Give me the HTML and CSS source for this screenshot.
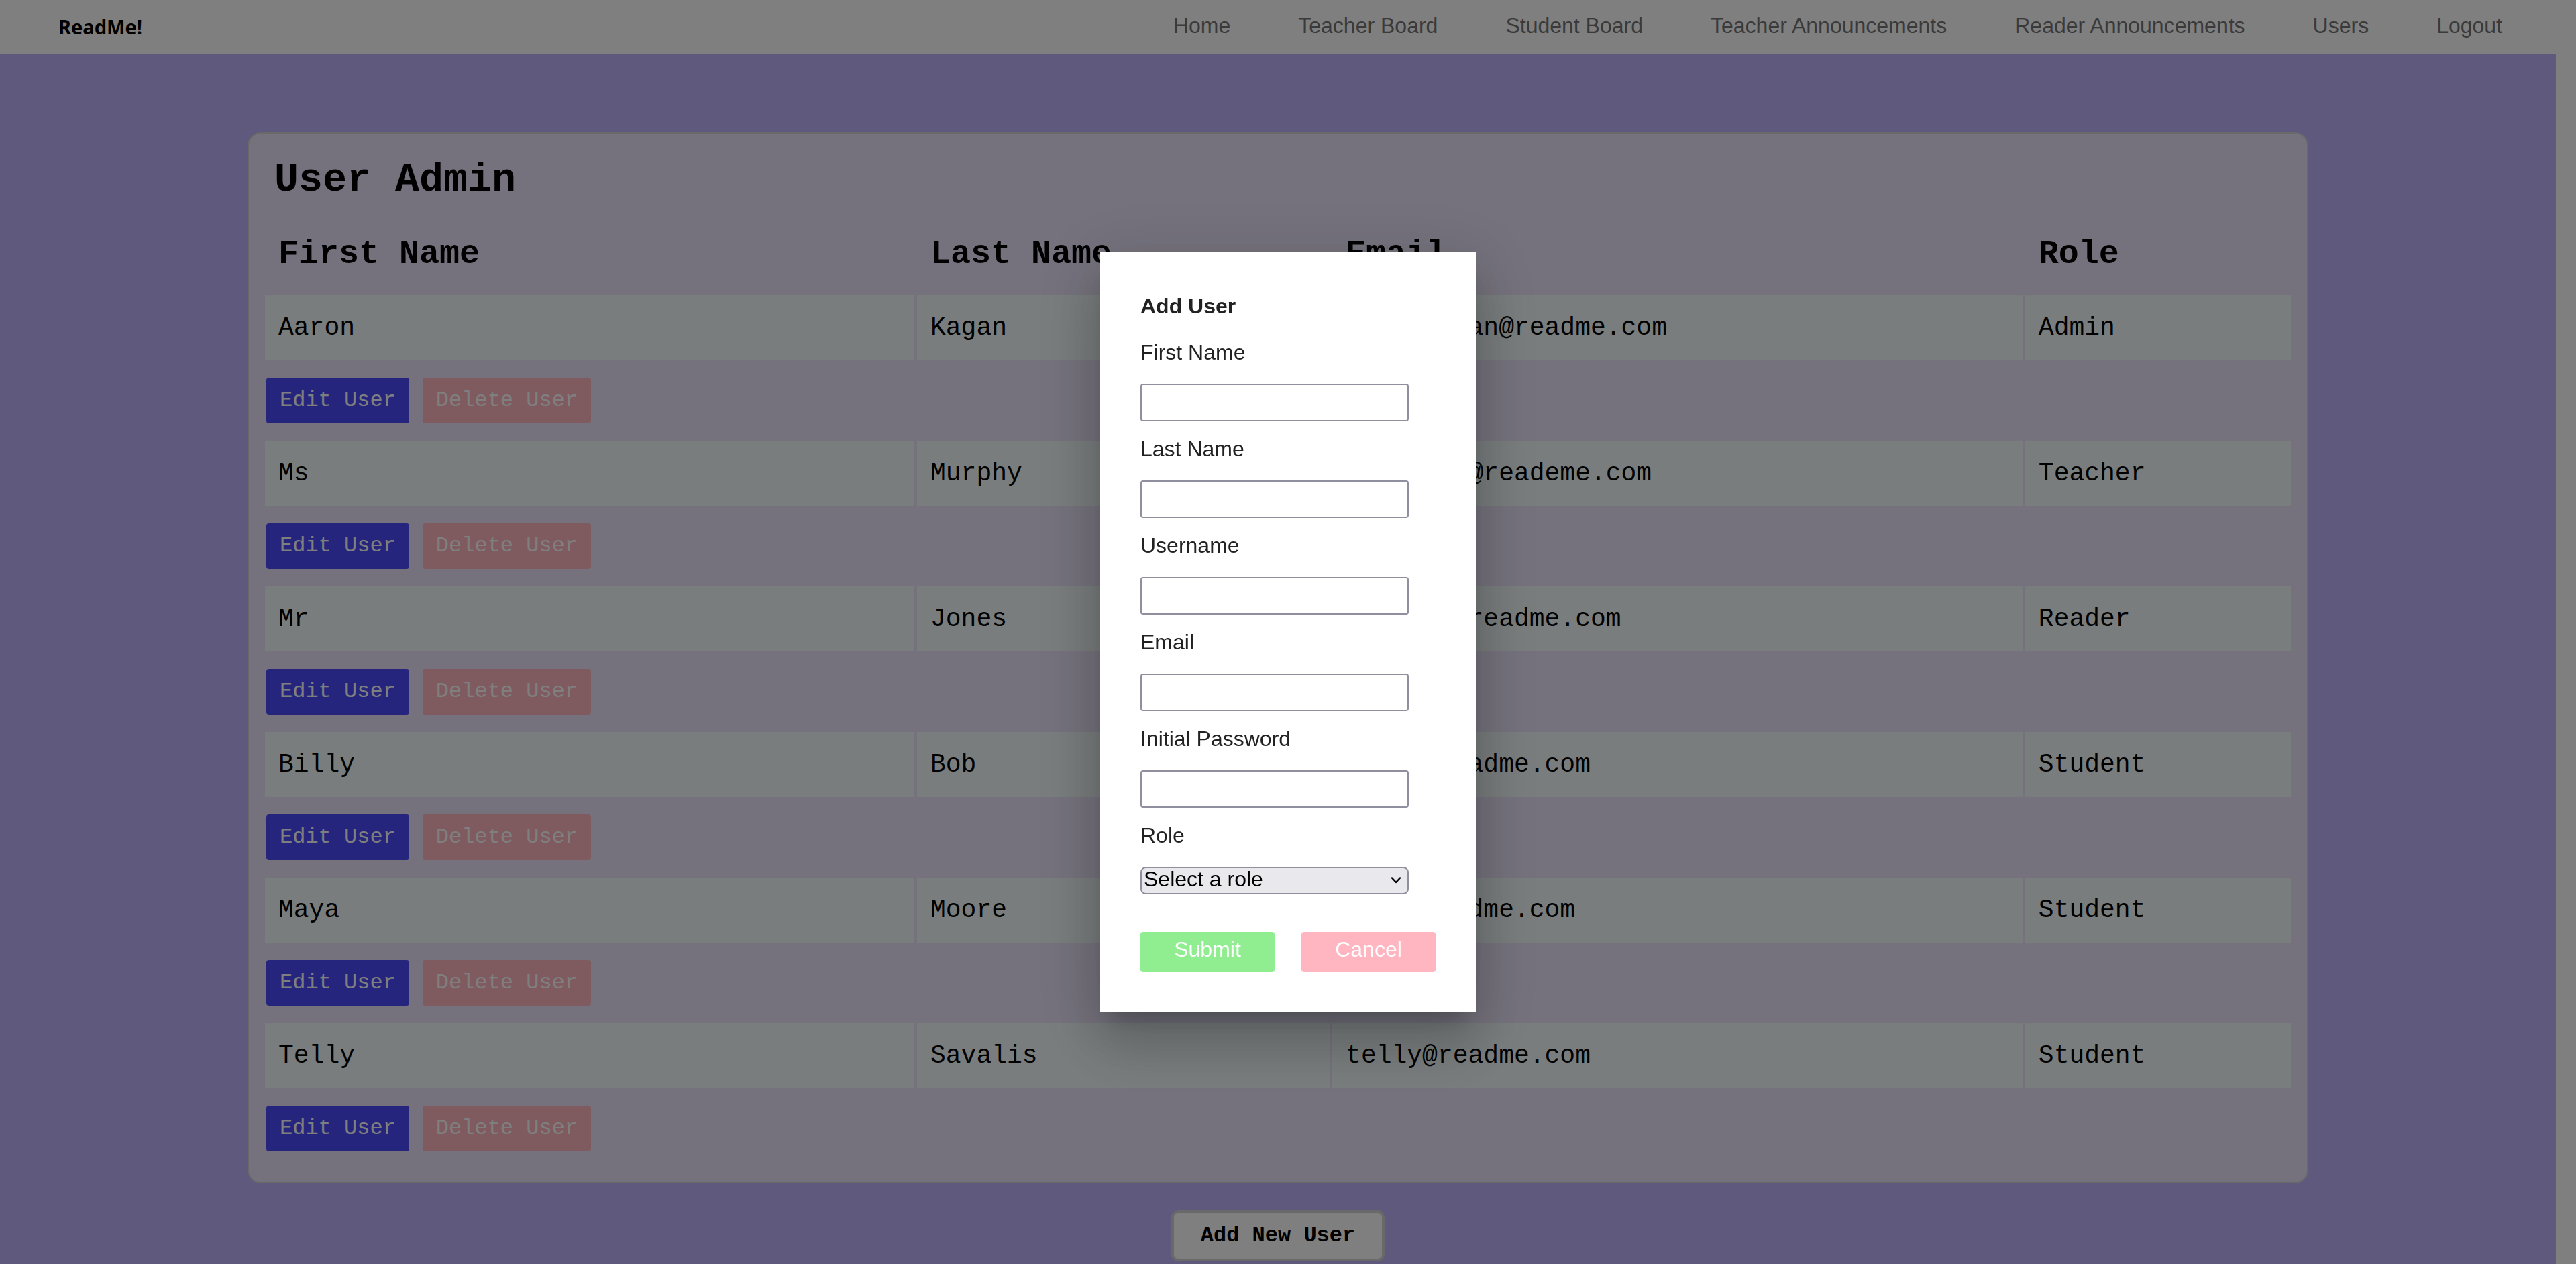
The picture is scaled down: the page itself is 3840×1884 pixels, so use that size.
FILE: index.html
```html
<!DOCTYPE html>
<html lang="en">
<head>
<meta charset="utf-8">
<title>ReadMe! - User Admin</title>
<link rel="stylesheet" href="styles.css">
</head>
<body>
<header class="topbar">
  <a class="brand" href="#">ReadMe!</a>
  <nav class="nav">
    <a href="#">Home</a>
    <a href="#">Teacher Board</a>
    <a href="#">Student Board</a>
    <a href="#">Teacher Announcements</a>
    <a href="#">Reader Announcements</a>
    <a href="#">Users</a>
    <a href="#">Logout</a>
  </nav>
</header>
<main class="page">
  <section class="card">
    <h1 class="card-title">User Admin</h1>
    <table class="users">
      <colgroup><col class="col-first"><col class="col-last"><col class="col-email"><col class="col-role"></colgroup>
      <thead>
        <tr><th scope="col">First Name</th><th scope="col">Last Name</th><th scope="col">Email</th><th scope="col">Role</th></tr>
      </thead>
      <tbody>
        <tr><td>Aaron</td><td>Kagan</td><td>aaronkagan@readme.com</td><td>Admin</td></tr>
        <tr class="actions"><td colspan="4"><div class="action-row"><button class="btn edit" type="button">Edit User</button><button class="btn delete" type="button">Delete User</button></div></td></tr>
        <tr><td>Ms</td><td>Murphy</td><td>msmurphy@reademe.com</td><td>Teacher</td></tr>
        <tr class="actions"><td colspan="4"><div class="action-row"><button class="btn edit" type="button">Edit User</button><button class="btn delete" type="button">Delete User</button></div></td></tr>
        <tr><td>Mr</td><td>Jones</td><td>mrjones@readme.com</td><td>Reader</td></tr>
        <tr class="actions"><td colspan="4"><div class="action-row"><button class="btn edit" type="button">Edit User</button><button class="btn delete" type="button">Delete User</button></div></td></tr>
        <tr><td>Billy</td><td>Bob</td><td>billy@readme.com</td><td>Student</td></tr>
        <tr class="actions"><td colspan="4"><div class="action-row"><button class="btn edit" type="button">Edit User</button><button class="btn delete" type="button">Delete User</button></div></td></tr>
        <tr><td>Maya</td><td>Moore</td><td>maya@readme.com</td><td>Student</td></tr>
        <tr class="actions"><td colspan="4"><div class="action-row"><button class="btn edit" type="button">Edit User</button><button class="btn delete" type="button">Delete User</button></div></td></tr>
        <tr><td>Telly</td><td>Savalis</td><td>telly@readme.com</td><td>Student</td></tr>
        <tr class="actions"><td colspan="4"><div class="action-row"><button class="btn edit" type="button">Edit User</button><button class="btn delete" type="button">Delete User</button></div></td></tr>
      </tbody>
    </table>
  </section>
  <button class="add-user" type="button">Add New User</button>
</main>
<div class="backdrop">
  <form class="dialog" role="dialog" aria-labelledby="dialog-title">
    <h2 class="dialog-title" id="dialog-title">Add User</h2>
    <div class="field"><label for="first-name">First Name</label><input id="first-name" type="text"></div>
    <div class="field"><label for="last-name">Last Name</label><input id="last-name" type="text"></div>
    <div class="field"><label for="username">Username</label><input id="username" type="text"></div>
    <div class="field"><label for="email">Email</label><input id="email" type="text"></div>
    <div class="field"><label for="password">Initial Password</label><input id="password" type="password"></div>
    <div class="field">
      <label for="role">Role</label>
      <div class="select-wrap">
        <select id="role"><option>Select a role</option><option>Admin</option><option>Teacher</option><option>Reader</option><option>Student</option></select>
        <svg class="chevron" viewBox="0 0 16 10" aria-hidden="true"><path d="M2 1.500 8 8l6-6.500" fill="none" stroke="#000" stroke-width="2.400" stroke-linecap="round" stroke-linejoin="round"/></svg>
      </div>
    </div>
    <div class="dialog-buttons">
      <button class="submit" type="button">Submit</button>
      <button class="cancel" type="button">Cancel</button>
    </div>
  </form>
</div>
</body>
</html>
```
FILE: styles.css
```css
* { box-sizing: border-box; }

html, body { height: 100%; overflow: hidden; }

body {
  margin: 0;
  display: flex;
  flex-direction: column;
  background: #fff;
  font-family: "Liberation Sans", Arial, sans-serif;
  font-size: 32px;
  color: #222;
}

.topbar {
  flex: none;
  display: flex;
  align-items: center;
  justify-content: space-between;
  height: 80px;
  padding: 0 110px 0 87px;
  background: #fff;
}

.brand {
  font: bold 29px/40px "Noto Sans", sans-serif;
  color: #000;
  text-decoration: none;
}

.nav {
  display: flex;
  gap: 101px;
  padding-bottom: 4px;
}

.nav a {
  line-height: 36px;
  color: #747474;
  text-decoration: none;
}

.page {
  flex: 1 0 auto;
  display: flex;
  flex-direction: column;
  align-items: center;
  gap: 40px;
  margin-right: 30px;
  padding: 117px 0 40px;
  background: #beb2fc;
  font-family: "Liberation Mono", "Courier New", monospace;
  color: #000;
}

.card {
  width: 80vw;
  padding: 20px;
  border: 2px solid #d3d3d3;
  border-radius: 20px;
  background: #ebe5fb;
}

.card-title {
  margin: 0;
  padding: 15px 18px;
  font-size: 60px;
  line-height: 68px;
}

.users {
  width: 100%;
  table-layout: fixed;
  border-spacing: 4px;
}

.col-first { width: 32.18%; }
.col-last { width: 20.45%; }
.col-email { width: 34.2%; }
.col-role { width: 13.17%; }

.users th {
  padding: 29px 20px;
  font-size: 50px;
  line-height: 57px;
  text-align: left;
}

.users td {
  padding: 27px 20px;
  background: #f3fbfb;
  font-size: 38px;
  line-height: 43px;
}

.users .actions td {
  padding: 22px 2px;
  background: none;
}

.action-row { display: flex; gap: 20px; }

.btn {
  padding: 16px 20px;
  border: 0;
  border-radius: 4px;
  font: 32px/36px "Liberation Mono", "Courier New", monospace;
  color: #fff;
}

.edit { background: #4c4afc; }
.delete { background: #ffb6c1; }

.add-user {
  padding: 16px 40px;
  border: 4px solid #d3d3d3;
  border-radius: 10px;
  background: #fff;
  font: bold 32px/36px "Liberation Mono", "Courier New", monospace;
  color: #000;
}

.backdrop {
  position: fixed;
  inset: 0;
  display: flex;
  align-items: center;
  justify-content: center;
  background: rgba(0, 0, 0, 0.5);
}

.dialog {
  width: 560px;
  padding: 60px;
  background: #fff;
  box-shadow: 0 22px 30px -14px rgba(0, 0, 0, 0.2),
    0 48px 76px 6px rgba(0, 0, 0, 0.14),
    0 18px 92px 16px rgba(0, 0, 0, 0.12);
}

.dialog-title {
  margin: 0 0 29px;
  font-size: 32px;
  line-height: 40px;
}

.field {
  display: flex;
  flex-direction: column;
  align-items: flex-start;
  gap: 27px;
  margin-bottom: 21px;
}

.field label { line-height: 40px; }

.field input {
  width: 400px;
  height: 56px;
  border: 2px solid #8f8f9d;
  border-radius: 4px;
  background: #fff;
  font: inherit;
}

.select-wrap {
  display: grid;
  align-items: center;
  width: 400px;
}

.select-wrap > * { grid-area: 1 / 1; }

.field select {
  appearance: none;
  width: 100%;
  height: 41px;
  padding: 0 40px 4px 3px;
  border: 2px solid #8f8f9d;
  border-radius: 8px;
  background: #e9e9ed;
  font: 32px/32px "Liberation Sans", Arial, sans-serif;
  color: #000;
}

.chevron {
  justify-self: end;
  width: 16px;
  height: 10px;
  margin-right: 11px;
  pointer-events: none;
}

.dialog-buttons {
  display: flex;
  gap: 40px;
  padding-top: 35px;
}

.dialog-buttons button {
  width: 200px;
  height: 60px;
  padding: 0 0 8px;
  border: 0;
  border-radius: 4px;
  font: 32px/36px "Liberation Sans", Arial, sans-serif;
  color: #fff;
}

.submit { background: #90ee90; }
.cancel { background: #ffb6c1; }
```
